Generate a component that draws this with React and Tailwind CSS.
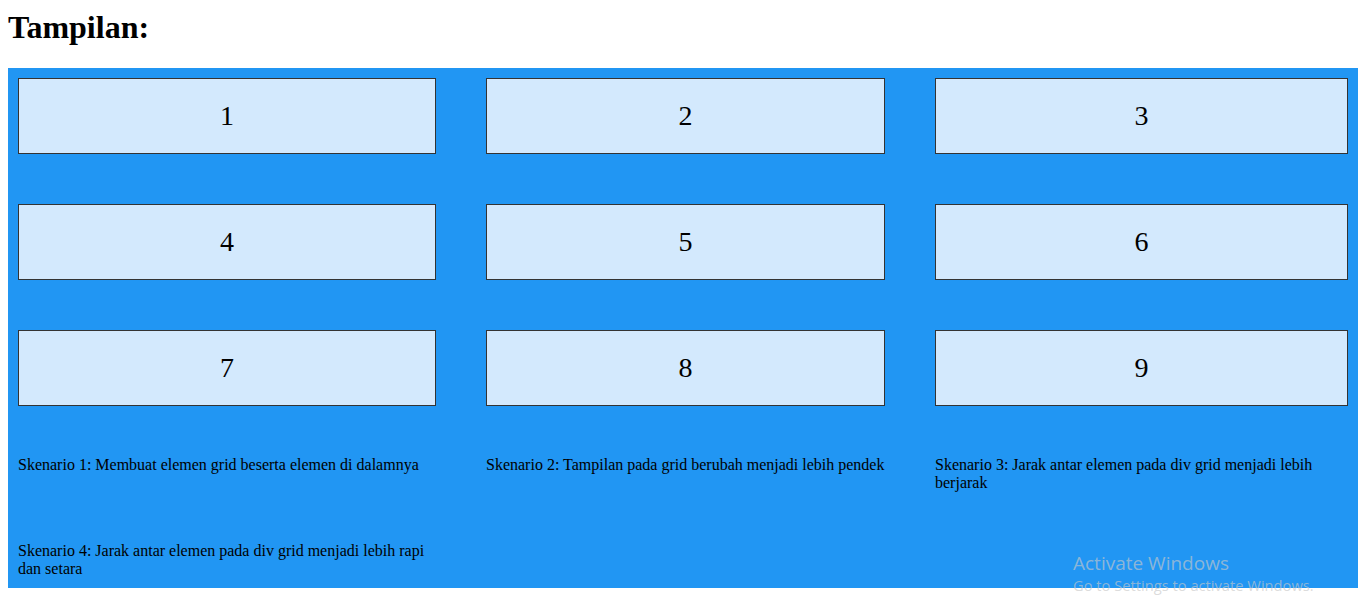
export default function App() {
  const nums = [1, 2, 3, 4, 5, 6, 7, 8, 9];
  const texts = [
    "Skenario 1: Membuat elemen grid beserta elemen di dalamnya",
    "Skenario 2: Tampilan pada grid berubah menjadi lebih pendek",
    "Skenario 3: Jarak antar elemen pada div grid menjadi lebih berjarak",
    "Skenario 4: Jarak antar elemen pada div grid menjadi lebih rapi dan setara",
  ];
  return (
    <div className="relative w-[1361px] h-[595px] bg-white overflow-hidden" style={{ fontFamily: '"Liberation Serif", "Times New Roman", serif' }}>
      <h1 className="pl-2 pt-[9px] text-[32px] leading-[36px] font-bold text-black">Tampilan:</h1>
      <div className="ml-2 mt-[23px] w-[1350px] bg-[#2196f3] p-[10px]">
        <div className="grid grid-cols-[418px_399px_413px] grid-rows-[76px_76px_76px_auto_auto] gap-[50px]">
          {nums.map((n) => (
            <div key={n} className="flex items-center justify-center border border-[#333333] bg-[#d3e9fd] text-[28px] text-black">
              {n}
            </div>
          ))}
          {texts.map((t, i) => (
            <div key={i} className="min-h-[36px] text-[16px] leading-[18px] text-black">
              {t}
            </div>
          ))}
        </div>
      </div>
      <div className="absolute left-[1073px] top-[550px] pointer-events-none" style={{ fontFamily: '"Open Sans", "Noto Sans", sans-serif' }}>
        <div className="text-[19px] leading-[26px] text-[#c8c8c8]/65">Activate Windows</div>
        <div className="text-[14.7px] leading-[18px] text-[#c8c8c8]/65">Go to Settings to activate Windows.</div>
      </div>
    </div>
  );
}
